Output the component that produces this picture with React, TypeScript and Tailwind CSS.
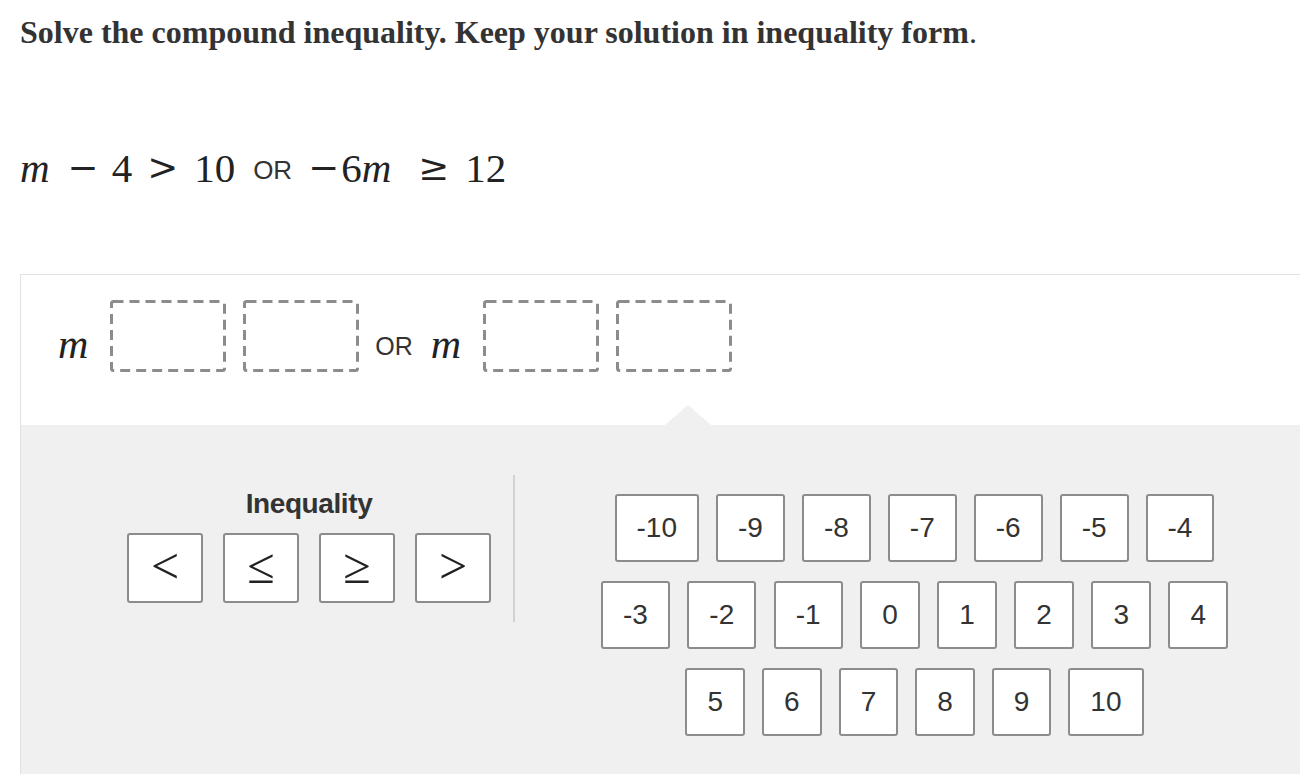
import React from "react";

const serif = "font-['Liberation_Serif','Times_New_Roman',serif]";
const sans = "font-['Liberation_Sans',Arial,sans-serif]";
const op = "font-['DejaVu_Serif',serif] text-[37px]";

const rows: string[][] = [
  ["-10", "-9", "-8", "-7", "-6", "-5", "-4"],
  ["-3", "-2", "-1", "0", "1", "2", "3", "4"],
  ["5", "6", "7", "8", "9", "10"],
];

const symbols = ["<", "≤", "≥", ">"];

// Empty answer slot: a dashed rounded box.
function Slot() {
  return (
    <div className="relative h-[72px] w-[116px]">
      <svg className="absolute inset-0" width="116" height="72" viewBox="0 0 116 72">
        <rect
          x="1.5"
          y="1.5"
          width="113"
          height="69"
          rx="2"
          fill="none"
          stroke="#8c8c8c"
          strokeWidth="3"
          strokeDasharray="10 6"
        />
      </svg>
    </div>
  );
}

function Key({ label, className = "" }: { label: string; className?: string }) {
  return (
    <button
      className={`flex h-[68px] items-center justify-center rounded-[3px] border-2 border-[#8c8c8c] bg-white text-[#333] ${className}`}
    >
      {label}
    </button>
  );
}

export default function App() {
  return (
    <div className={`h-[774px] w-[1300px] overflow-hidden bg-white text-[#333] ${sans}`}>
      <h1 className={`pl-5 pt-[13px] text-[32px] font-bold leading-[38px] ${serif}`}>
        Solve the compound inequality. Keep your solution in inequality form<span className="font-normal">.</span>
      </h1>

      {/* the problem */}
      <div className={`mt-[89px] flex h-[56px] items-center pl-5 text-[41px] leading-[56px] text-[#222] ${serif}`}>
        <span className="italic">m</span>
        <span className={`ml-[18px] ${op}`}>−</span>
        <span className="ml-[13px]">4</span>
        <span className={`ml-[15px] ${op}`}>&gt;</span>
        <span className="ml-[16px]">10</span>
        <span className={`ml-[18px] pt-[4px] text-[26px] text-[#333] ${sans}`}>OR</span>
        <span className={`ml-[16px] ${op}`}>−</span>
        <span className="ml-[2px]">6</span>
        <span className="italic">m</span>
        <span className={`ml-[27px] ${op}`}>≥</span>
        <span className="ml-[16px]">12</span>
      </div>

      {/* answer panel */}
      <div className="ml-5 mt-[78px] w-[1294px] border-l border-t border-[#e2e2e2]">
        <div className={`flex h-[150px] items-start pl-[37px] pt-[25px] ${serif}`}>
          <div className="flex h-[72px] items-center">
            <span className="mt-[16px] text-[42px] italic leading-none text-[#222]">m</span>
            <div className="ml-[22px]">
              <Slot />
            </div>
            <div className="ml-[17px]">
              <Slot />
            </div>
            <span className={`ml-[16px] pt-[22px] text-[25px] ${sans}`}>OR</span>
            <span className="ml-[18px] mt-[16px] text-[42px] italic leading-none text-[#222]">m</span>
            <div className="ml-[22px]">
              <Slot />
            </div>
            <div className="ml-[17px]">
              <Slot />
            </div>
          </div>
        </div>

        <div className="relative flex h-[360px] bg-[#f0f0f0]">
          <div className="absolute -top-[20px] left-[644px] h-0 w-0 border-b-[20px] border-l-[23px] border-r-[23px] border-b-[#f0f0f0] border-l-transparent border-r-transparent" />

          <div className="flex w-[492px] flex-col items-center pl-[84px] pt-[63px]">
            <div className="text-[28px] font-bold leading-[32px] tracking-[-0.4px] text-[#333]">Inequality</div>
            <div className="mt-[13px] flex gap-5">
              {symbols.map((s) => (
                <button
                  key={s}
                  className={`flex h-[70px] w-[76px] items-center justify-center rounded-[3px] border-2 border-[#8c8c8c] bg-white text-[50px] leading-none text-[#222] ${serif}`}
                >
                  <span className="-mt-[4px]">{s}</span>
                </button>
              ))}
            </div>
          </div>

          <div className="mt-[50px] h-[147px] w-[2px] bg-[#d2d2d2]" />

          <div className="flex flex-1 flex-col items-center gap-y-[19px] pt-[69px] text-[28px]">
            {rows.map((row, i) => (
              <div key={i} className={`flex ${i === 1 ? "gap-x-[17.5px]" : "gap-x-[17px]"}`}>
                {row.map((n) => (
                  <Key key={n} label={n} className="px-[20px]" />
                ))}
              </div>
            ))}
          </div>
        </div>
      </div>
    </div>
  );
}
